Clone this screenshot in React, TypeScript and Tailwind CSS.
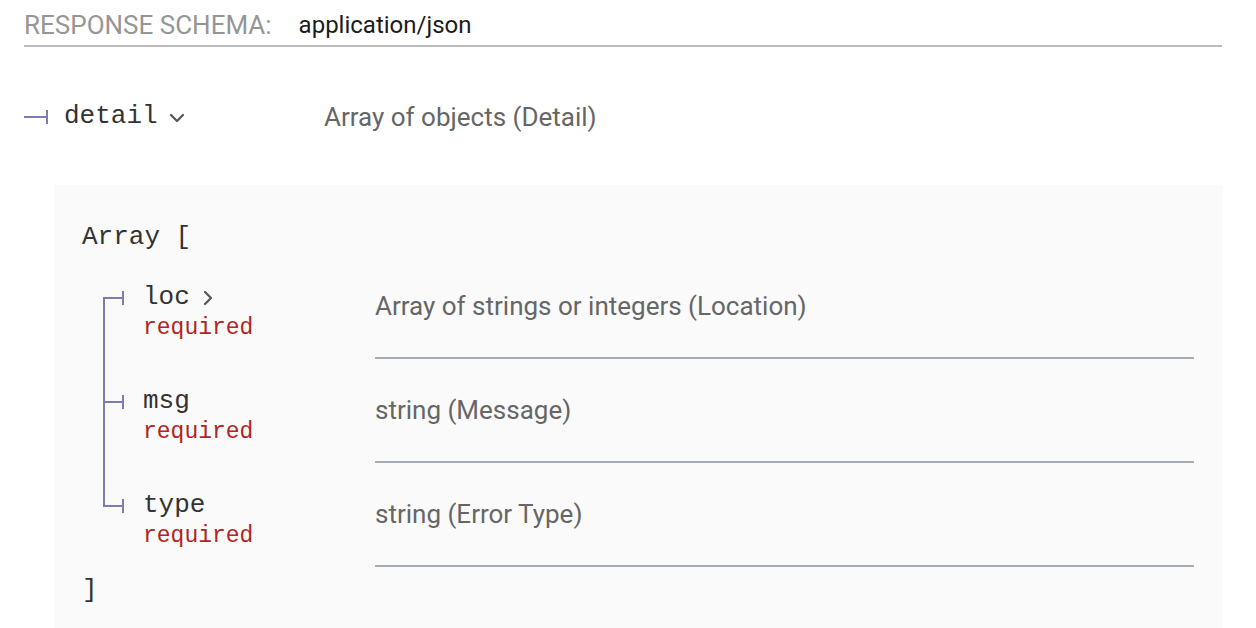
import React from 'react'

const LINE = 'bg-[#7c7cae]'
const MONO = { fontFamily: '"Liberation Mono", "Courier New", Courier, monospace' }

type Field = { name: string; type: string; expandable?: 'right' | 'down'; required?: boolean }

const fields: Field[] = [
  { name: 'loc', type: 'Array of strings or integers (Location)', expandable: 'right', required: true },
  { name: 'msg', type: 'string (Message)', required: true },
  { name: 'type', type: 'string (Error Type)', required: true },
]

function Chevron({ dir }: { dir: 'right' | 'down' }) {
  if (dir === 'down') {
    return (
      <svg width="16" height="10" viewBox="0 0 16 10" className="ml-[11px] mt-[3px] shrink-0">
        <polyline points="2,2 8,8 14,2" fill="none" stroke="#555" strokeWidth="2.2" strokeLinecap="round" strokeLinejoin="round" />
      </svg>
    )
  }
  return (
    <svg width="12" height="16" viewBox="0 0 12 16" className="ml-[12px] shrink-0">
      <polyline points="3,2 9,8 3,14" fill="none" stroke="#555" strokeWidth="2.2" strokeLinecap="round" strokeLinejoin="round" />
    </svg>
  )
}

// tree connector: horizontal stub with end tick, plus vertical rail segment
function Branch({ pos }: { pos: 'first' | 'middle' | 'last' }) {
  return (
    <>
      {pos === 'first' && <span className={`absolute left-0 top-[43px] bottom-0 w-[2px] ${LINE}`} />}
      {pos === 'middle' && <span className={`absolute left-0 top-0 bottom-0 w-[2px] ${LINE}`} />}
      {pos === 'last' && <span className={`absolute left-0 top-0 h-[44px] w-[2px] ${LINE}`} />}
      <span className={`absolute left-0 top-[42px] h-[2px] w-[21px] ${LINE}`} />
      <span className={`absolute left-[19px] top-[36px] h-[14px] w-[2px] ${LINE}`} />
    </>
  )
}

function FieldRow({ f, pos }: { f: Field; pos: 'first' | 'middle' | 'last' }) {
  return (
    <div className="flex items-stretch">
      <div className="relative w-[272px] shrink-0 pl-[40px] pt-[23px]">
        <Branch pos={pos} />
        <div className="flex items-center leading-[39px] text-[26px] text-[#333]" style={MONO}>
          <span>{f.name}</span>
          {f.expandable && <Chevron dir={f.expandable} />}
        </div>
        {f.required && (
          <div className="leading-[22px] text-[23px] text-[#b42323]" style={MONO}>
            required
          </div>
        )}
      </div>
      <div className="flex-1 border-b-2 border-[#a3aeba] pt-[32px] pb-[31px] leading-[39px] text-[26px] text-[#666]">
        {f.type}
      </div>
    </div>
  )
}

export default function App() {
  return (
    <main className="min-h-screen bg-white pl-[24px] pr-[34px]" style={{ fontFamily: 'Roboto, "Liberation Sans", sans-serif' }}>
      {/* response schema header */}
      <div className="flex items-center border-b-2 border-[#bdbdbd] pt-[6px] leading-[39px]">
        <span className="text-[26px] uppercase text-[#969696]">Response Schema:</span>
        <span className="ml-[27px] text-[24px] text-[#1c1c1c]">application/json</span>
      </div>

      {/* top-level property */}
      <div className="mt-[50px] flex items-start">
        <div className="relative w-[300px] shrink-0 pl-[40px]">
          <span className={`absolute left-0 top-[19px] h-[2px] w-[23px] ${LINE}`} />
          <span className={`absolute left-[22px] top-[13px] h-[14px] w-[2px] ${LINE}`} />
          <div className="flex items-center leading-[39px] text-[26px] text-[#333]" style={MONO}>
            <span>detail</span>
            <Chevron dir="down" />
          </div>
        </div>
        <div className="pt-[1px] leading-[39px] text-[26px] text-[#666]">Array of objects (Detail)</div>
      </div>

      {/* nested schema box */}
      <div className="ml-[30px] mt-[48px] bg-[#fafafa] pl-[28px] pr-[28px] pt-[34px] pb-[28px]">
        <div className="leading-[36px] text-[26px] text-[#333]" style={MONO}>
          Array [
        </div>
        <div className="pl-[21px]">
          {fields.map((f, i) => (
            <FieldRow key={f.name} f={f} pos={i === 0 ? 'first' : i === fields.length - 1 ? 'last' : 'middle'} />
          ))}
        </div>
        <div className="mt-[4px] leading-[39px] text-[26px] text-[#333]" style={MONO}>
          ]
        </div>
      </div>
    </main>
  )
}
